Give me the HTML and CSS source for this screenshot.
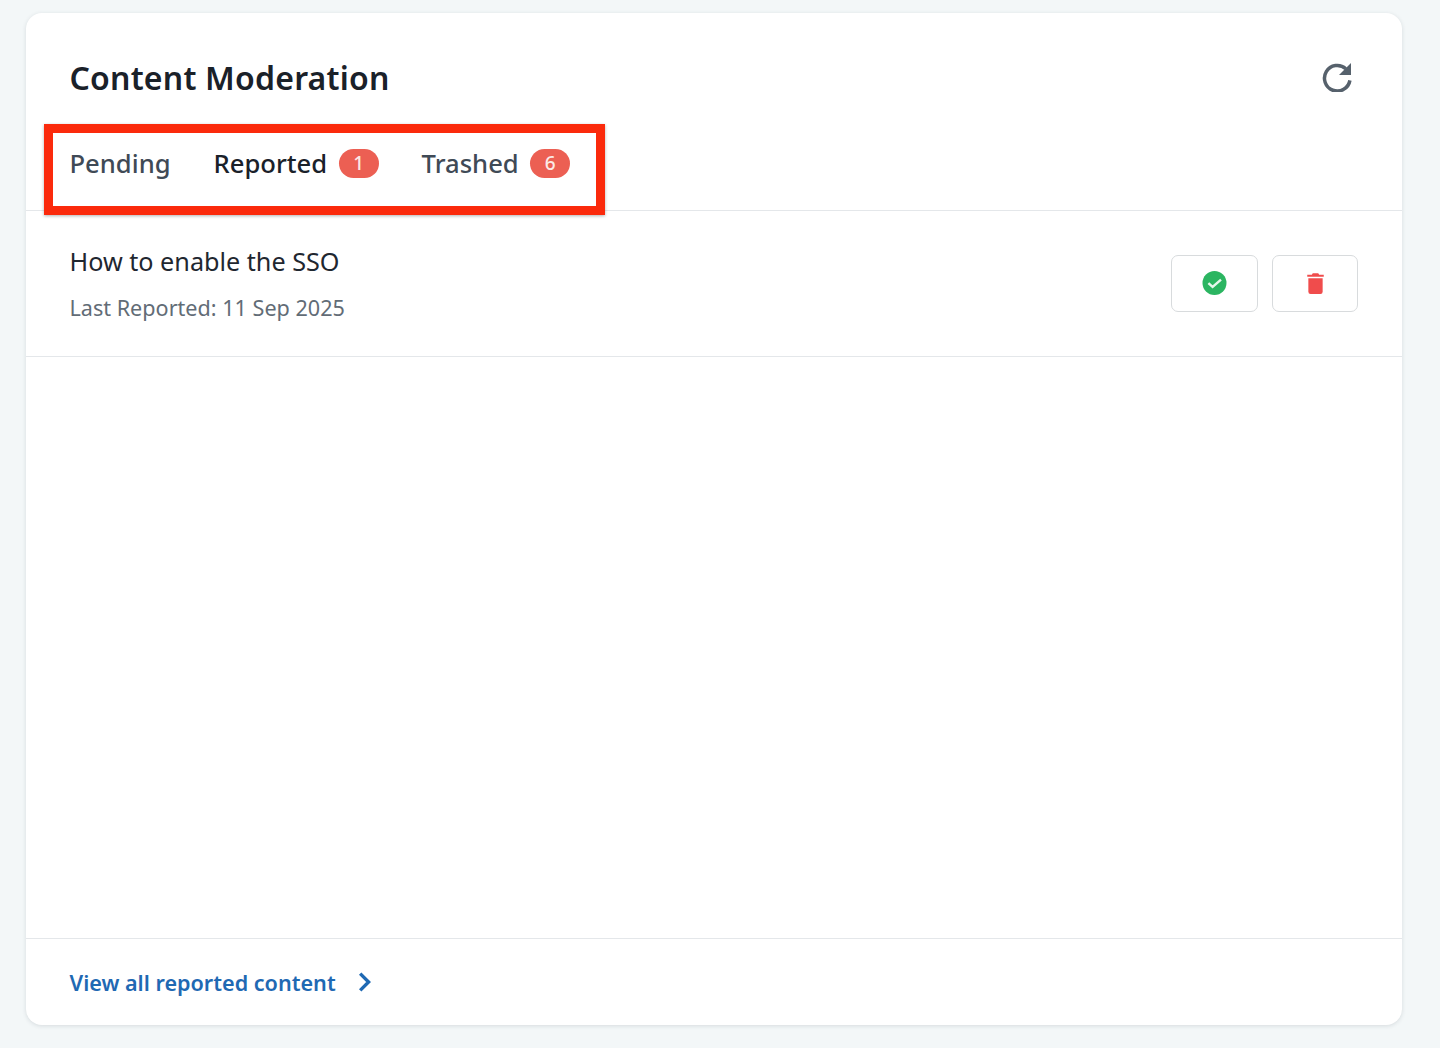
FILE: index.html
```html
<!DOCTYPE html>
<html lang="en">
<head>
<meta charset="utf-8">
<title>Content Moderation</title>
<link rel="stylesheet" href="styles.css">
</head>
<body>
<main class="card">
  <header class="card-head">
    <h1 class="title">Content Moderation</h1>
    <button class="refresh" aria-label="Refresh">
      <svg viewBox="0 0 30 30" width="30" height="30"><path d="M27.9 18.4A12.8 12.8 0 1 1 23.8 6.7" fill="none" stroke="#56616c" stroke-width="3.5"/><path d="M29 1V13H17Z" fill="#56616c"/></svg>
    </button>
  </header>
  <nav class="tabs">
    <a class="tab">Pending</a>
    <a class="tab active">Reported <span class="badge">1</span></a>
    <a class="tab">Trashed <span class="badge">6</span></a>
  </nav>
  <section class="list">
    <article class="row">
      <div class="row-text">
        <div class="row-title">How to enable the SSO</div>
        <div class="row-meta">Last Reported: 11 Sep 2025</div>
      </div>
      <div class="actions">
        <button class="action approve" aria-label="Approve">
          <svg viewBox="0 0 26 26" width="26" height="26"><circle cx="12.5" cy="13" r="12" fill="#2bb561"/><path d="M6.4 13.2l4.2 3.8 8.4-7.4" fill="none" stroke="#e6f7ec" stroke-width="2.4"/></svg>
        </button>
        <button class="action remove" aria-label="Delete">
          <svg viewBox="0 0 18 24" width="17" height="22"><path d="M6 1.4h6l1 1.6h5v2.2H0V3h5z" fill="#f04c4c"/><path d="M1.2 6.8h15.6v14.8a2.4 2.4 0 0 1-2.4 2.4H3.6a2.4 2.4 0 0 1-2.4-2.4z" fill="#f04c4c"/></svg>
        </button>
      </div>
    </article>
  </section>
  <footer class="card-foot">
    <a class="view-all">View all reported content
      <svg viewBox="0 0 14 20" width="14" height="20"><path d="M2.2 1.6l8.4 8.4-8.4 8.4" fill="none" stroke="#1f69b3" stroke-width="3.4"/></svg>
    </a>
  </footer>
  <div class="highlight"></div>
</main>
</body>
</html>
```
FILE: styles.css
```css
* { box-sizing: border-box; }
html, body { height: 100%; }
body {
  margin: 0;
  padding: 13px 38px 23px 26px;
  background: #f3f7f8;
  font-family: "Noto Sans", sans-serif;
  color: #1a2129;
}
.card {
  position: relative;
  height: 1012px;
  display: flex;
  flex-direction: column;
  background: #fff;
  border-radius: 16px;
  box-shadow: 0 1px 4px rgba(40, 60, 70, .14);
}
.card-head {
  display: flex;
  justify-content: space-between;
  align-items: center;
  padding: 43px 50px 0 43.5px;
}
.title {
  margin: 0;
  font-size: 32px;
  line-height: 44px;
  font-weight: 600;
  letter-spacing: .2px;
}
.refresh {
  display: flex;
  padding: 0;
  border: 0;
  background: none;
  margin-top: -2px;
}
.tabs {
  display: flex;
  gap: 43px;
  align-items: center;
  height: 111px;
  padding: 17px 43.5px 0;
  border-bottom: 1px solid #e4e7ea;
}
.tab {
  display: flex;
  align-items: center;
  gap: 11.5px;
  font-size: 25.6px;
  font-weight: 500;
  color: #3f4a56;
}
.tab.active { color: #1a2129; }
.badge {
  display: flex;
  align-items: center;
  justify-content: center;
  width: 40px;
  height: 29px;
  padding-bottom: 2px;
  border-radius: 15px;
  background: #ec5f53;
  color: #fbe9e6;
  font-size: 19px;
  font-weight: 500;
}
.list { flex: 1; }
.row {
  display: flex;
  justify-content: space-between;
  align-items: center;
  height: 146px;
  padding: 0 44px 0 43.5px;
  border-bottom: 1px solid #e4e7ea;
}
.row-text { padding-bottom: 2px; }
.row-title {
  font-size: 25.2px;
  line-height: 36px;
  color: #1f2730;
}
.row-meta {
  margin-top: 14px;
  font-size: 21.6px;
  line-height: 30px;
  color: #626c76;
}
.actions { display: flex; gap: 14px; }
.action {
  display: flex;
  align-items: center;
  justify-content: center;
  width: 87px;
  height: 57px;
  padding: 0 0 2px;
  background: #fff;
  border: 1px solid #d8dbdd;
  border-radius: 7px;
}
.action.remove { width: 86px; }
.card-foot {
  display: flex;
  align-items: center;
  height: 87px;
  padding: 0 43.5px;
  border-top: 1px solid #e4e7ea;
}
.view-all {
  display: flex;
  align-items: center;
  gap: 22px;
  font-size: 21.6px;
  font-weight: 600;
  color: #1f69b3;
}
.highlight {
  position: absolute;
  left: 18px;
  top: 111px;
  width: 561px;
  height: 91px;
  border: 9px solid #fb2a0c;
  box-shadow: 0 1px 3px rgba(0, 0, 0, .3);
}
```
